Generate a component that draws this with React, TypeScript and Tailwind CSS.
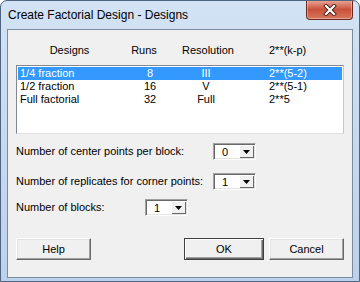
import React from "react";

const font = "font-['Liberation_Sans',Arial,sans-serif]";

function Combo({ value }: { value: string }) {
  return (
    <div className="flex h-[17px] w-[43px] border border-t-[#a0a0a0] border-l-[#a0a0a0] border-r-white border-b-white bg-white shadow-[inset_1px_1px_0_#696969,inset_-1px_-1px_0_#e3e3e3]">
      <div className="flex flex-1 items-center pl-[8px] pt-[1px] text-[11px] leading-none text-black">
        {value}
      </div>
      <div className="my-[1px] mr-[1px] flex w-[15px] items-center justify-center bg-[#f0f0f0] shadow-[inset_1px_1px_0_#ffffff,inset_-1px_-1px_0_#696969]">
        <svg width="7" height="4" viewBox="0 0 7 4">
          <path d="M0 0 H7 L3.5 4 Z" fill="#000" />
        </svg>
      </div>
    </div>
  );
}

function Button({ label, isDefault, w }: { label: string; isDefault?: boolean; w: string }) {
  return (
    <div
      className={
        isDefault
          ? "flex h-[22px] w-[80px] items-center justify-center border border-[#404040] bg-[#f0f0f0] text-[11px] text-black shadow-[inset_1px_1px_0_#ffffff,inset_-1px_-1px_0_#696969,inset_-2px_-2px_0_#a0a0a0]"
          : w === "75"
          ? "flex h-[22px] w-[75px] items-center justify-center border border-t-white border-l-white border-r-[#696969] border-b-[#696969] bg-[#f0f0f0] text-[11px] text-black shadow-[inset_-1px_-1px_0_#a0a0a0,inset_1px_1px_0_#e3e3e3]"
          : "flex h-[22px] w-[75px] items-center justify-center border border-t-white border-l-white border-r-[#696969] border-b-[#696969] bg-[#f0f0f0] text-[11px] text-black shadow-[inset_-1px_-1px_0_#a0a0a0,inset_1px_1px_0_#e3e3e3]"
      }
    >
      {label}
    </div>
  );
}

const rows = [
  { d: "1/4 fraction", r: "8", res: "III", k: "2**(5-2)", sel: true },
  { d: "1/2 fraction", r: "16", res: "V", k: "2**(5-1)", sel: false },
  { d: "Full factorial", r: "32", res: "Full", k: "2**5", sel: false },
];

export default function App() {
  return (
    <div className={`${font} relative flex h-[282px] w-[360px] flex-col overflow-hidden rounded-t-[7px] border border-[#4e6480] bg-gradient-to-b from-[#d3e3f5] via-[#c6d9ef] to-[#bcd2ec]`}>
      {/* Title bar */}
      <div className="flex h-[28px] shrink-0 items-center pl-[7px] text-[12px] text-black">
        Create Factorial Design - Designs
      </div>
      {/* Close button */}
      <div className="absolute right-[6px] top-[-1px] flex h-[20px] w-[47px] items-center justify-center rounded-b-[4px] border border-t-0 border-[#6b2a1f] bg-gradient-to-b from-[#e9a99a] via-[#c9513b] to-[#d9755c] shadow-[inset_0_0_0_1px_rgba(255,255,255,0.35)]">
        <svg width="14" height="12" viewBox="0 0 14 12">
          <path d="M3 2 L11 10 M11 2 L3 10" stroke="#4a2018" strokeWidth="4" strokeLinecap="square" />
          <path d="M3 2 L11 10 M11 2 L3 10" stroke="#ffffff" strokeWidth="2.2" strokeLinecap="square" />
        </svg>
      </div>

      {/* Client area */}
      <div className="mx-[6px] flex h-[249px] flex-col border border-[#7a8ba0] bg-[#f0f0f0] px-[8px] text-[11px] text-black">
        {/* Headers */}
        <div className="mt-[14px] flex h-[13px] items-center leading-[13px]">
          <div className="w-[107px] text-center">Designs</div>
          <div className="w-[42px] text-center">Runs</div>
          <div className="w-[86px] text-center">Resolution</div>
          <div className="pl-[18px]">2**(k-p)</div>
        </div>
        {/* List */}
        <div className="mt-[8px] h-[69px] border border-t-[#828790] border-l-[#828790] border-r-[#c8c8c8] border-b-[#e0e0e0] bg-white pt-[1px]">
          {rows.map((r) => (
            <div
              key={r.d}
              className={
                r.sel
                  ? "mx-[1px] flex h-[13px] items-center bg-[#3399ff] leading-[13px] text-white"
                  : "mx-[1px] flex h-[13px] items-center leading-[13px] text-black"
              }
            >
              <div className="w-[107px] pl-[2px]">{r.d}</div>
              <div className="w-[50px] text-center">{r.r}</div>
              <div className="w-[62px] text-center">{r.res}</div>
              <div className="pl-[32px]">{r.k}</div>
            </div>
          ))}
        </div>
        {/* Settings */}
        <div className="mt-[9px] flex h-[17px] items-center">
          <div className="w-[197px]">Number of center points per block:</div>
          <Combo value="0" />
        </div>
        <div className="mt-[13px] flex h-[17px] items-center">
          <div className="w-[197px]">Number of replicates for corner points:</div>
          <Combo value="1" />
        </div>
        <div className="mt-[9px] flex h-[17px] items-center">
          <div className="w-[129px]">Number of blocks:</div>
          <Combo value="1" />
        </div>
        {/* Buttons */}
        <div className="mt-[22px] flex items-center">
          <Button label="Help" w="75" />
          <div className="flex-1" />
          <Button label="OK" isDefault w="80" />
          <div className="w-[5px]" />
          <Button label="Cancel" w="75" />
        </div>
      </div>
    </div>
  );
}
